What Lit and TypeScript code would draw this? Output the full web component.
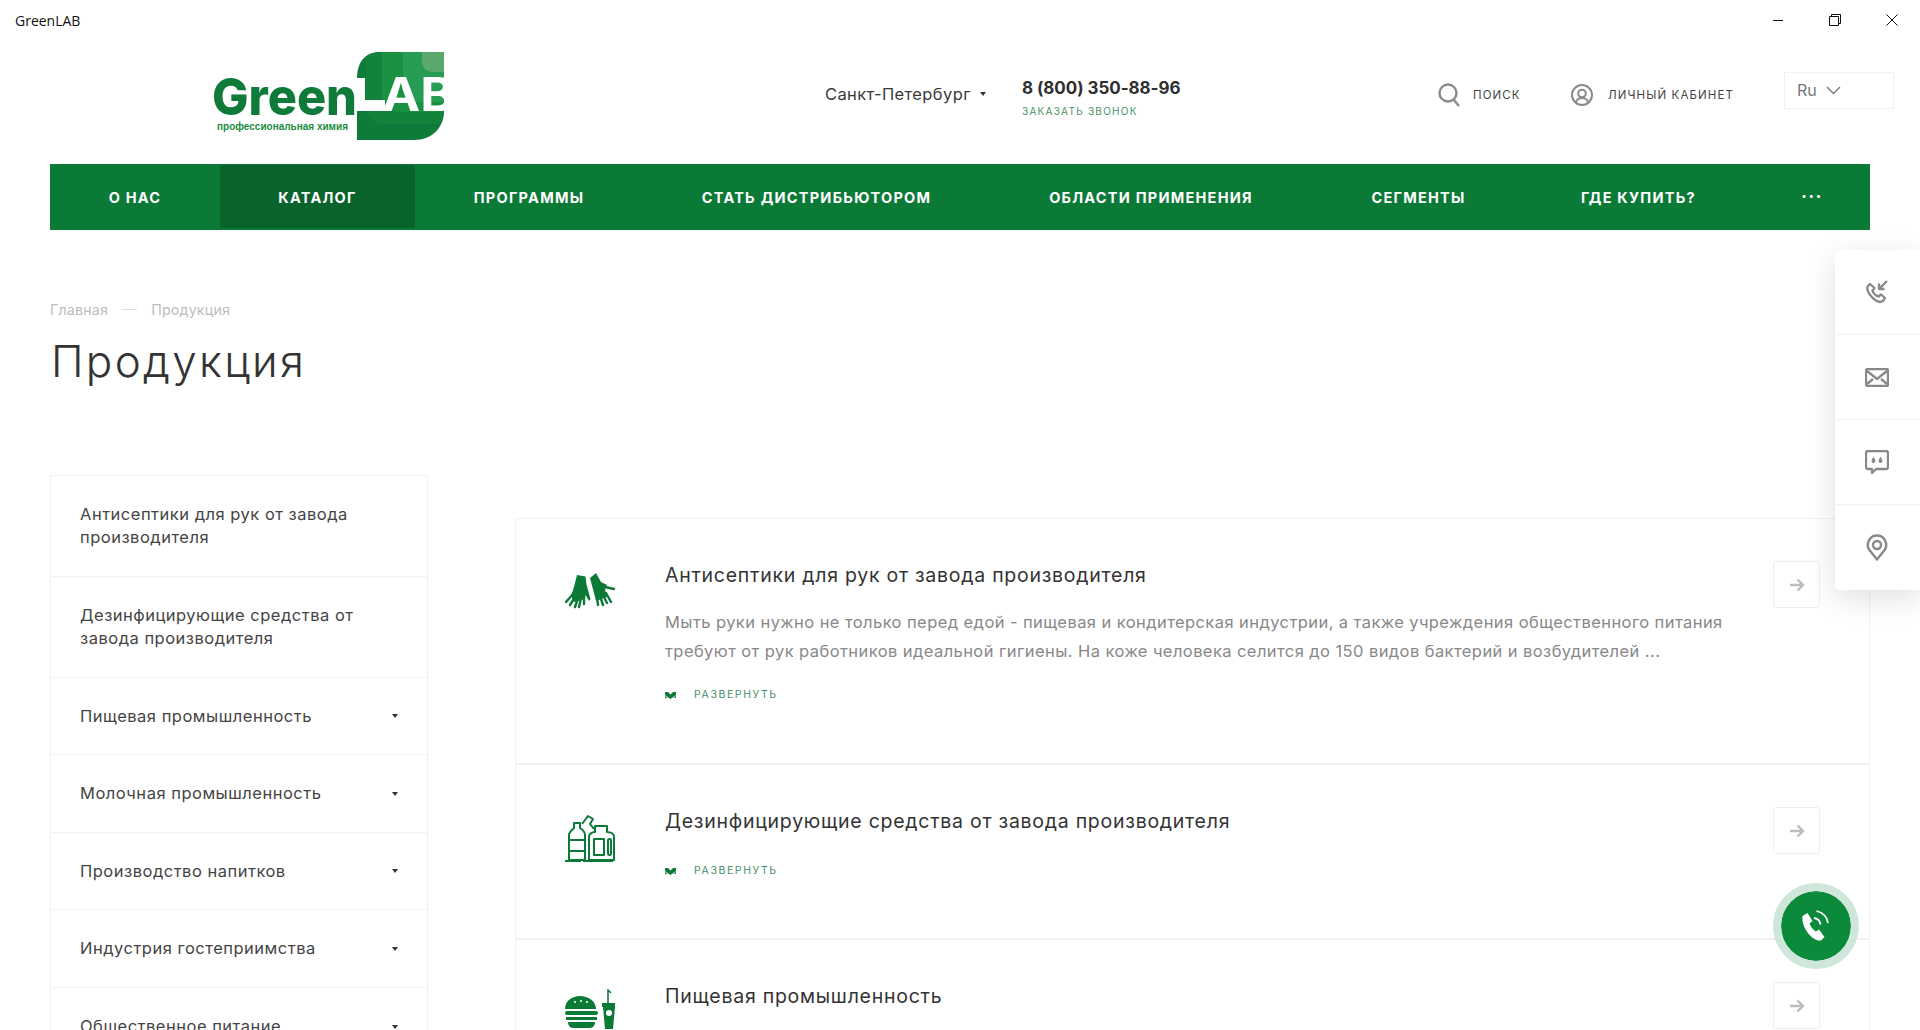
import { LitElement, html, css, svg } from "lit";
import { customElement } from "lit/decorators.js";

const SIDE = [
  { t: "Антисептики для рук от завода производителя", h: 101 },
  { t: "Дезинфицирующие средства от завода производителя", h: 101 },
  { t: "Пищевая промышленность", h: 77, c: 1 },
  { t: "Молочная промышленность", h: 78, c: 1 },
  { t: "Производство напитков", h: 77, c: 1 },
  { t: "Индустрия гостеприимства", h: 78, c: 1 },
  { t: "Общественное питание", h: 78, c: 1 },
];
const NAV: [string, number][] = [
  ["О НАС", 170], ["КАТАЛОГ", 195], ["ПРОГРАММЫ", 228], ["СТАТЬ ДИСТРИБЬЮТОРОМ", 347],
  ["ОБЛАСТИ ПРИМЕНЕНИЯ", 322], ["СЕГМЕНТЫ", 213], ["ГДЕ КУПИТЬ?", 227], ["···", 118],
];

const gloves = svg`<g fill="#0b7a37" stroke="#0b7a37" stroke-linecap="round">
  <path stroke="none" d="M12 7l8.500 1.500 1 8 4 14.500-1.500 2-3.500-6-.5 4-11 3-3-6 3-9z"/>
  <path fill="none" stroke-width="2.400" d="M8 26l-7 8M10 29l-5 8M13 30l-3 9M16 30l-2 9M19 29v7"/>
  <path stroke="none" d="M25 10l6-5 5 9 6 3-2 5 2 7-11 4-2-8z"/>
  <path fill="none" stroke-width="2.400" d="M40 19l9 2M32 29l1 8M35 28l3 9M38 27l4 8M41 25l5 9"/>
</g>`;
const bottles = svg`<g fill="none" stroke="#0b7a37" stroke-width="2" stroke-linejoin="round">
  <path d="M0 47h50" stroke-dasharray="16 2 30 2"/>
  <path d="M9 9h6v5c3 2 5 4 5 7v25H4V21c0-3 3-5 5-7z"/>
  <path d="M3 26h17M3 37h17"/>
  <path d="M17 10l6-8 5 3-3 5 4 5"/>
  <path d="M30 18v-6h12v6c4 0 7 2 7 5v23H24V23c0-3 3-5 6-5z"/>
  <rect x="29" y="25" width="10" height="16"/><rect x="43" y="25" width="3" height="16" rx="1.500"/>
</g>`;
const burger = svg`<g fill="#0b7a37">
  <path d="M0 20C0 12 7 7 15 7s16 5 16 13z"/>
  <path d="M9 13h2M15 12h2M21 13h2" stroke="#fff" stroke-width="1.300"/>
  <rect x="0" y="22" width="33" height="4" rx="2"/>
  <path d="M1 28h31v3H1zM3 33h27c0 3-2 6-5 6H8c-3 0-5-3-5-6z"/>
  <path d="M37 14h14v4h-1l-2 22h-8l-2-22h-1z"/><path d="M43 14V1l3 3" fill="none" stroke="#0b7a37" stroke-width="1.500"/>
  <circle cx="44" cy="24" r="3" fill="#fff"/>
</g>`;
const CARDS = [
  { t: "Антисептики для рук от завода производителя", icon: gloves, h: 246,
    d: ["Мыть руки нужно не только перед едой - пищевая и кондитерская индустрии, а также учреждения общественного питания", "требуют от рук работников идеальной гигиены. На коже человека селится до 150 видов бактерий и возбудителей ..."] },
  { t: "Дезинфицирующие средства от завода производителя", icon: bottles, h: 175 },
  { t: "Пищевая промышленность", icon: burger, h: 176 },
];

@customElement("app-root")
export class AppRoot extends LitElement {
  static styles = css`
    :host { display: block; height: 1030px; overflow: hidden; position: relative; background: #fff;
      font-family: Inter, "Noto Sans", sans-serif; color: #333; }
    * { box-sizing: border-box; }
    svg { display: block; flex: none; }
    .titlebar { height: 40px; display: flex; align-items: center; justify-content: space-between; padding-left: 15px;
      font: 14px "Open Sans", sans-serif; color: #111; }
    .wc { display: flex; }
    .wc span { width: 57px; height: 40px; display: flex; align-items: center; justify-content: center; }
    .head { height: 124px; padding-left: 212px; display: flex; align-items: center; }
    .logo { width: 234px; height: 92px; margin-top: -12px; }
    .city { margin-left: 379px; font-size: 16.500px; letter-spacing: .38px; color: #3a3a3a; display: flex; align-items: center; width: 198px; gap: 9px; margin-top: -16px; white-space: nowrap; }
    .caret { width: 0; height: 0; border: 3px solid transparent; border-top: 4px solid #333; border-bottom: 0; flex: none; }
    .phone { width: 417px; margin-top: -10px; margin-left: -1px; }
    .phone b { display: block; font-size: 17px; font-weight: 700; letter-spacing: -.05px; color: #2f2f2f; line-height: 24px; }
    .phone small { display: block; font-size: 10px; letter-spacing: 1.250px; color: #4a8f69; margin-top: 4px; line-height: 14px; }
    .act { display: flex; align-items: center; font-size: 11.500px; letter-spacing: 1.100px; color: #444; margin-top: -15px; white-space: nowrap; }
    .act svg { margin-top: 1px; }
    .s { width: 133px; gap: 13px; margin-left: -1px; }
    .u { width: 213px; gap: 15px; }
    .lang { width: 110px; height: 37px; border: 1px solid #f1f1f1; margin-top: -24px; display: flex; align-items: center; padding-left: 12px; gap: 9px; font-size: 16px; color: #777; }
    .nav { margin: 0 50px; height: 66px; background: #0b7a37; display: flex; padding-bottom: 2px; padding-top: 1px; }
    .nav a { display: flex; align-items: center; justify-content: center; color: #fff; font-size: 14.500px; font-weight: 700; letter-spacing: 1.250px; white-space: nowrap; padding-top: 2px; }
    .nav a.on { background: #09632c; }
    .nav a.dots { font-size: 18px; padding-top: 0; padding-left: 2px; }
    .body { padding: 70px 50px 0; }
    .crumbs { display: flex; align-items: center; font-size: 14.200px; color: #bdbdbd; height: 19px; letter-spacing: .22px; }
    .crumbs i { width: 15px; height: 1px; background: #ddd; margin: 0 14px; }
    h1 { margin: 16px 0 0 1px; font-size: 44px; font-weight: 300; line-height: 52px; letter-spacing: 2.300px; color: #333; }
    .cols { display: flex; gap: 87px; margin-top: 88px; }
    .side { width: 378px; flex: none; border: 1px solid #f1f1f1; border-bottom: 0; }
    .side div { border-bottom: 1px solid #f1f1f1; padding: 0 29px; display: flex; align-items: center; justify-content: space-between; font-size: 16.500px; line-height: 23px; letter-spacing: .5px; color: #444; }
    .main { flex: 1; margin-top: 43px; border: 1px solid #f1f1f1; border-width: 1px 1px 0; }
    .card { border-bottom: 2px solid #f1f1f1; display: flex; padding: 49px 49px 0 49px; gap: 50px; position: relative; }
    .ic { width: 50px; height: 50px; flex: none; }
    .tx { flex: 1; }
    .tx h3 { margin: -6px 0 0; font-size: 19.500px; font-weight: 400; line-height: 26px; letter-spacing: .74px; color: #333; }
    .tx p { margin: 0; font-size: 16.500px; line-height: 28.500px; color: #888; letter-spacing: .42px; white-space: nowrap; }
    .tx h3 + p { margin-top: 20px; }
    .more { display: flex; align-items: center; gap: 18px; font-size: 10.500px; letter-spacing: 1.600px; color: #4a8f69; line-height: 14px; margin-top: 23px; }
    .tx h3 + .more { margin-top: 30px; }
    .btn { position: absolute; right: 49px; top: 42px; width: 47px; height: 47px; border: 1px solid #eee; border-radius: 3px; display: flex; align-items: center; justify-content: center; }
    .panel { position: absolute; right: 0; top: 250px; width: 85px; height: 340px; background: #fff; box-shadow: 0 8px 30px rgba(0,0,0,.13); border-radius: 4px 0 0 4px; }
    .panel div { height: 85px; border-bottom: 1px solid #f2f2f2; display: flex; align-items: center; justify-content: center; padding-right: 2px; }
    .panel div:last-child { border: 0; }
    .call { position: absolute; left: 1773px; top: 883px; width: 86px; height: 86px; border-radius: 50%; border: 8px solid #cfe7da; background: #0b8a3c; background-clip: padding-box; display: flex; align-items: center; justify-content: center; }
  `;

  arrow() {
    return html`<svg width="16" height="14" viewBox="0 0 16 14" fill="none" stroke="#bbb" stroke-width="2.400"><path d="M1 7h13M8.500 1.500 14 7l-5.500 5.500"/></svg>`;
  }

  render() {
    return html`
      <div class="titlebar"><span>GreenLAB</span>
        <div class="wc">
          <span><svg width="12" height="12"><path d="M1 6.500h10" stroke="#111"/></svg></span>
          <span><svg width="12" height="12" fill="none" stroke="#111"><path d="M.5 2.500h9v9h-9zM2.500 2.500v-2h9v9h-2"/></svg></span>
          <span><svg width="12" height="12" stroke="#111"><path d="M.5.5l11 11M11.500.5l-11 11"/></svg></span>
        </div>
      </div>
      <div class="head">
        <svg class="logo" viewBox="212 50 234 92">
          <defs><clipPath id="lc"><path d="M357 78c0-16 8-26 24-26h63v58c0 18-12 30-30 30h-57z"/></clipPath></defs>
          <g clip-path="url(#lc)">
            <rect x="350" y="50" width="100" height="95" fill="#0f7b3a"/>
            <rect x="366" y="40" width="90" height="84" rx="20" fill="#13833c"/>
            <rect x="382" y="40" width="70" height="72" rx="18" fill="#1a9140"/>
            <rect x="403" y="40" width="60" height="62" rx="16" fill="#279c55"/>
            <rect x="422" y="40" width="40" height="32" rx="10" fill="#5aa86c"/>
            <path d="M350 78h15v22h20v11h-35z" fill="#fff"/>
            <text x="382" y="111" font-family="Inter, sans-serif" font-weight="700" font-size="46" fill="#fff" textLength="72" lengthAdjust="spacingAndGlyphs">AB</text>
          </g>
          <text x="212" y="115" font-family="Inter, sans-serif" font-weight="800" font-size="51" fill="#0f7b3a" textLength="145" lengthAdjust="spacingAndGlyphs">Green</text>
          <text x="217" y="130" font-family="Liberation Sans, sans-serif" font-weight="700" font-size="10.500" fill="#1b8d40" textLength="131" lengthAdjust="spacingAndGlyphs">профессиональная химия</text>
        </svg>
        <div class="city">Санкт-Петербург <span class="caret"></span></div>
        <div class="phone"><b>8 (800) 350-88-96</b><small>ЗАКАЗАТЬ ЗВОНОК</small></div>
        <div class="act s">
          <svg width="22" height="24" viewBox="0 0 22 24" fill="none" stroke="#8a8a8a" stroke-width="2.400"><circle cx="10" cy="10" r="8.500"/><path d="M15.500 16.500 21 23"/></svg>
          ПОИСК
        </div>
        <div class="act u">
          <svg width="22" height="22" viewBox="0 0 22 22" fill="none" stroke="#8a8a8a" stroke-width="2"><circle cx="11" cy="11" r="10"/><circle cx="11" cy="9.500" r="3.800"/><path d="M5 18c1-3 3-4 6-4s5 1 6 4"/></svg>
          ЛИЧНЫЙ КАБИНЕТ
        </div>
        <div class="lang">Ru <svg width="15" height="9" viewBox="0 0 15 9" fill="none" stroke="#777" stroke-width="1.400"><path d="M1 1l6.500 6.500L14 1"/></svg></div>
      </div>
      <nav class="nav">
        ${NAV.map(([t, w], i) => html`<a class="${i === 1 ? "on" : ""} ${i === 7 ? "dots" : ""}" style="width:${w}px">${t}</a>`)}
      </nav>
      <div class="body">
        <div class="crumbs">Главная<i></i>Продукция</div>
        <h1>Продукция</h1>
        <div class="cols">
          <div class="side">
            ${SIDE.map((s) => html`<div style="height:${s.h}px"><span>${s.t}</span>${s.c ? html`<span class="caret"></span>` : ""}</div>`)}
          </div>
          <div class="main">
            ${CARDS.map((c) => html`<div class="card" style="height:${c.h}px">
              <svg class="ic" viewBox="0 0 50 50">${c.icon}</svg>
              <div class="tx">
                <h3>${c.t}</h3>
                ${c.d ? c.d.map((l) => html`<p>${l}</p>`) : ""}
                ${c.icon !== burger ? html`<div class="more">
                  <svg width="11" height="7" viewBox="0 0 11 7"><path d="M0 0h3l2.500 2.500L8 0h3v3L5.500 7 0 3z" fill="#0b7a37"/><path d="M0 3.500 3 6H0zM11 3.500 8 6h3z" fill="#4a8f69"/></svg>
                  РАЗВЕРНУТЬ</div>` : ""}
              </div>
              <a class="btn">${this.arrow()}</a>
            </div>`)}
          </div>
        </div>
      </div>
      <div class="panel">
        <div><svg width="24" height="24" viewBox="0 0 24 24" fill="none" stroke="#888" stroke-width="2.300" stroke-linejoin="round"><path d="M5 4 2.500 6.500C1 12 9 21 15 22c2 0 4-2 5-4l-4-3.500-2.500 2C11 16 8 13 7.500 10.500L9.500 8z"/><path d="M22 1l-8 8M14 3.500V9h5.500" /></svg></div>
        <div><svg width="24" height="19" viewBox="0 0 24 19" fill="none" stroke="#888" stroke-width="2.300"><rect x="1" y="1" width="22" height="17" rx="1.500"/><path d="M2 3l10 8 10-8M2 16l6-5M22 16l-6-5"/></svg></div>
        <div><svg width="24" height="25" viewBox="0 0 24 25" fill="none" stroke="#888" stroke-width="2.300" stroke-linejoin="round"><path d="M3 1h18a2 2 0 0 1 2 2v14a2 2 0 0 1-2 2H11l-4 4v-4H3a2 2 0 0 1-2-2V3a2 2 0 0 1 2-2z"/><path d="M8.500 6.500C8 8 6.500 9.500 6.500 11a2 2 0 0 0 4 0c0-1.500-1.500-3-2-4.500zM15.500 6.500c-.5 1.500-2 3-2 4.500a2 2 0 0 0 4 0c0-1.500-1.500-3-2-4.500z" fill="#888" stroke="none"/></svg></div>
        <div><svg width="22" height="27" viewBox="0 0 22 27" fill="none" stroke="#888" stroke-width="2.400" stroke-linejoin="round"><path d="M11 25.500 3 15.500C0 10 3 1.500 11 1.500s11 8.500 8 14z"/><circle cx="11" cy="11" r="4"/></svg></div>
      </div>
      <div class="call">
        <svg width="30" height="32" viewBox="0 0 30 32" fill="none">
          <path d="M1.500 6 6.500 3l5 8-3 2.500c1 3 3.500 6.500 6.500 8l3-2 5.500 7.500-3.500 3.500C12 32 0 18 1.500 6z" fill="#fff"/>
          <path d="M13 8c3.500.5 6 3 6.500 6.500M15.500 1c6 1.500 10.500 6 11.500 12" stroke="#fff" stroke-width="1.800"/>
        </svg>
      </div>
    `;
  }
}
